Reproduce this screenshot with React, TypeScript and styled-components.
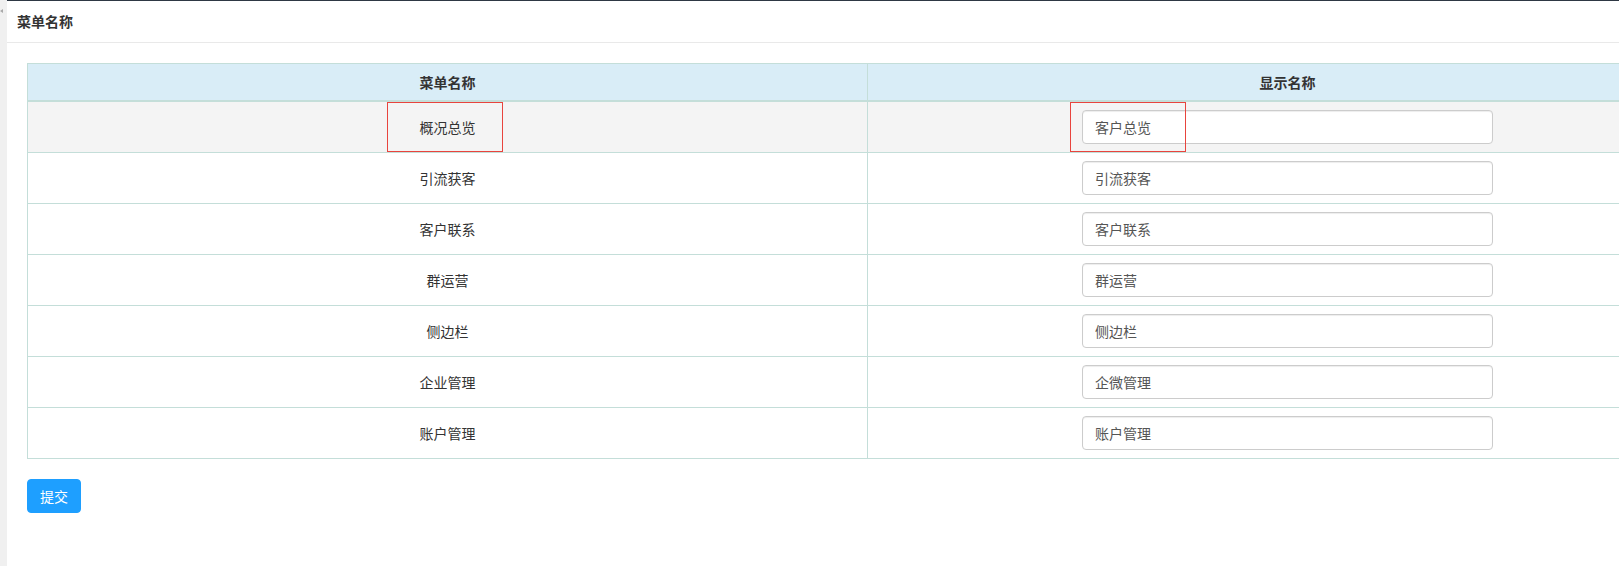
import { useState } from 'react'
import styled, { createGlobalStyle } from 'styled-components'

const GlobalStyle = createGlobalStyle`
  html, body {
    margin: 0;
    padding: 0;
    background: #fff;
    overflow: hidden;
  }
  body {
    font-family: "Noto Sans CJK SC", "Liberation Sans", sans-serif;
    font-size: 14px;
    color: #333;
  }
  * {
    box-sizing: border-box;
  }
`

const Page = styled.div`
  display: flex;
  width: 1619px;
  height: 566px;
  overflow: hidden;
`

const SideStrip = styled.div`
  flex: 0 0 7px;
  background: #f0f0f0;
  padding-top: 9px;
`

const StripMark = styled.div`
  width: 0;
  height: 0;
  border-top: 2px solid transparent;
  border-bottom: 2px solid transparent;
  border-right: 3px solid #a9a9a9;
`

const Main = styled.div`
  flex: 1;
  min-width: 0;
  border-top: 1px solid #2e3844;
  overflow: hidden;
`

const TitleBar = styled.div`
  height: 42px;
  line-height: 41px;
  padding-left: 10px;
  border-bottom: 1px solid #e9e9e9;
  font-weight: bold;
  font-size: 14px;
  color: #333;
`

const Content = styled.div`
  padding: 20px;
`

const Table = styled.table`
  width: 1681px;
  table-layout: fixed;
  border-collapse: collapse;
  border-spacing: 0;
  border: 1px solid #c4ded9;
  margin-bottom: 20px;
`

const HeadCell = styled.th`
  padding: 8px;
  line-height: 20px;
  font-weight: bold;
  text-align: center;
  background: #d9edf7;
  border: 1px solid #c4ded9;
  border-bottom-width: 2px;
`

const Row = styled.tr<{ $active?: boolean }>`
  background: ${({ $active }) => ($active ? '#f4f4f4' : '#fff')};
`

const Cell = styled.td`
  position: relative;
  padding: 8px;
  height: 50px;
  line-height: 20px;
  text-align: center;
  vertical-align: middle;
  border: 1px solid #c4ded9;
`

const NameInput = styled.input`
  display: inline-block;
  width: 411px;
  height: 34px;
  padding: 6px 12px;
  border: 1px solid #ccc;
  border-radius: 4px;
  background: #fff;
  box-shadow: inset 0 1px 1px rgba(0, 0, 0, 0.075);
  font-family: inherit;
  font-size: 14px;
  line-height: 20px;
  color: #555;
  text-align: left;
  outline: none;
  vertical-align: middle;
`

// red marker boxes drawn over the first row
const Marker = styled.div<{ $offset: number }>`
  position: absolute;
  top: 0;
  bottom: 0;
  left: calc(50% + ${({ $offset }) => $offset}px);
  width: 116px;
  border: 1px solid #e8443d;
  pointer-events: none;
`

const SubmitButton = styled.button`
  height: 34px;
  padding: 6px 12px;
  border: 1px solid #1e9fff;
  border-radius: 4px;
  background: #1e9fff;
  color: #fff;
  font-family: inherit;
  font-size: 14px;
  line-height: 20px;
  cursor: pointer;
`

const menus = [
  { name: '概况总览', label: '客户总览' },
  { name: '引流获客', label: '引流获客' },
  { name: '客户联系', label: '客户联系' },
  { name: '群运营', label: '群运营' },
  { name: '侧边栏', label: '侧边栏' },
  { name: '企业管理', label: '企微管理' },
  { name: '账户管理', label: '账户管理' },
]

export default function App() {
  const [labels, setLabels] = useState(menus.map((m) => m.label))

  return (
    <Page>
      <GlobalStyle />
      <SideStrip>
        <StripMark />
      </SideStrip>
      <Main>
        <TitleBar>菜单名称</TitleBar>
        <Content>
          <Table>
            <thead>
              <tr>
                <HeadCell>菜单名称</HeadCell>
                <HeadCell>显示名称</HeadCell>
              </tr>
            </thead>
            <tbody>
              {menus.map((m, i) => (
                <Row key={m.name} $active={i === 0}>
                  <Cell>
                    {m.name}
                    {i === 0 && <Marker $offset={-61} />}
                  </Cell>
                  <Cell>
                    <NameInput
                      value={labels[i]}
                      onChange={(e) => setLabels(labels.map((l, j) => (j === i ? e.target.value : l)))}
                    />
                    {i === 0 && <Marker $offset={-218} />}
                  </Cell>
                </Row>
              ))}
            </tbody>
          </Table>
          <SubmitButton>提交</SubmitButton>
        </Content>
      </Main>
    </Page>
  )
}
